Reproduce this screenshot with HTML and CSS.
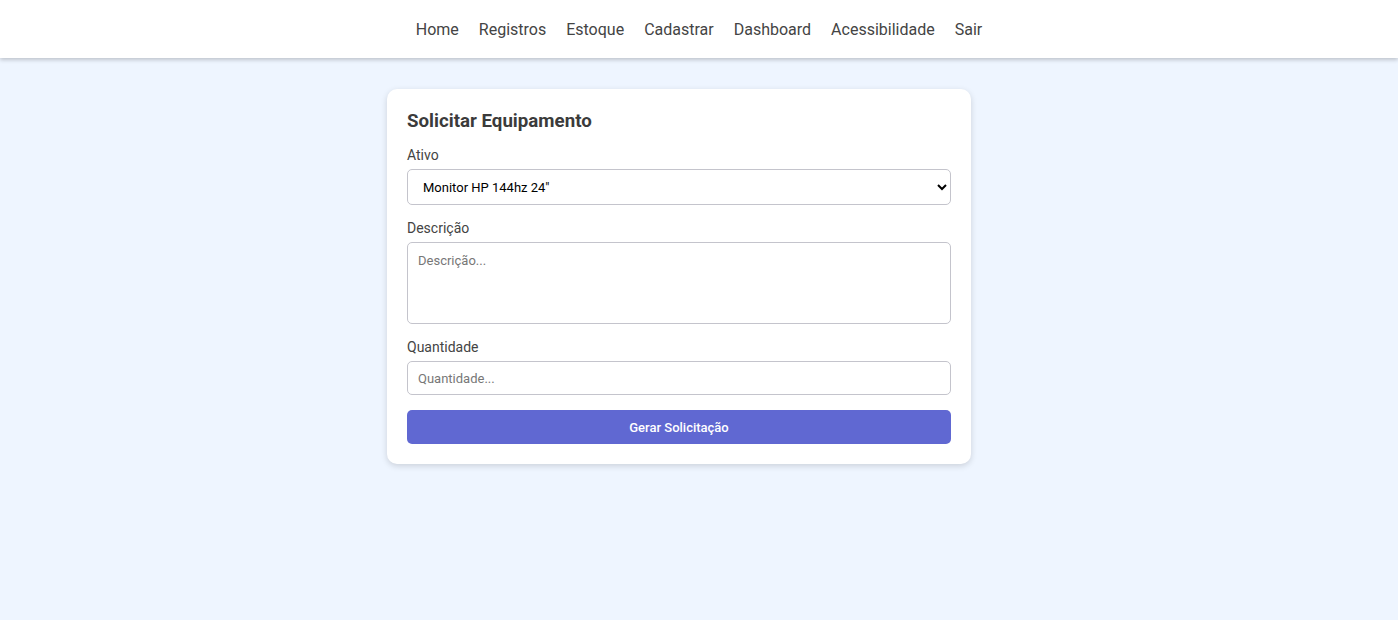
FILE: index.html
```html
<!DOCTYPE html>
<html lang="pt-BR">
<head>
<meta charset="utf-8">
<title>Solicitar Equipamento</title>
<link rel="stylesheet" href="styles.css">
</head>
<body>
<header class="topbar">
  <nav class="nav">
    <a href="#">Home</a>
    <a href="#">Registros</a>
    <a href="#">Estoque</a>
    <a href="#">Cadastrar</a>
    <a href="#">Dashboard</a>
    <a href="#">Acessibilidade</a>
    <a href="#">Sair</a>
  </nav>
</header>
<main class="wrap">
  <form class="card">
    <h3 class="title">Solicitar Equipamento</h3>
    <label class="label" for="ativo">Ativo</label>
    <select id="ativo" class="field select">
      <option>Monitor HP 144hz 24"</option>
    </select>
    <label class="label" for="desc">Descrição</label>
    <textarea id="desc" class="field textarea" placeholder="Descrição..."></textarea>
    <label class="label" for="qtd">Quantidade</label>
    <input id="qtd" class="field input" placeholder="Quantidade...">
    <button type="button" class="btn">Gerar Solicitação</button>
  </form>
</main>
</body>
</html>
```
FILE: styles.css
```css
* { box-sizing: border-box; }
html, body { margin: 0; padding: 0; }
body {
  background: #eef5ff;
  font-family: Roboto, "Liberation Sans", sans-serif;
  color: #333;
  min-height: 620px;
}
.topbar {
  background: #fff;
  height: 58px;
  box-shadow: 0 2px 4px rgba(0,0,0,0.2);
  display: flex;
  align-items: center;
  justify-content: center;
}
.nav {
  display: flex;
  gap: 20px;
}
.nav a {
  color: #444;
  text-decoration: none;
  font-size: 16px;
}
.wrap {
  width: 624px;
  margin: 31px auto 0;
}
.card {
  width: 584px;
  background: #fff;
  border-radius: 10px;
  padding: 21px 20px 20px;
  box-shadow: 0 2px 6px rgba(0,0,0,0.15);
  display: flex;
  flex-direction: column;
}
.title {
  margin: 0 0 15px;
  font-size: 18.72px;
  font-weight: 700;
  color: #3b3b3b;
  line-height: 22px;
}
.label {
  font-size: 14px;
  color: #444;
  line-height: 16px;
  margin-bottom: 6px;
}
.field {
  width: 544px;
  border: 1px solid #c4c4cc;
  border-radius: 5px;
  font-family: Roboto, "Liberation Sans", sans-serif;
  font-size: 13px;
  background: #fff;
  margin: 0 0 15px;
}
.select {
  height: 36px;
  padding: 0 6px 0 11px;
  color: #000;
}
.textarea {
  height: 82px;
  padding: 10px;
  resize: none;
  display: block;
}
.input {
  height: 34px;
  padding: 0 10px;
}
.field::placeholder { color: #777; }
.btn {
  height: 34px;
  width: 544px;
  border: none;
  border-radius: 5px;
  background: #6068d2;
  color: #fff;
  font-family: Roboto, "Liberation Sans", sans-serif;
  font-size: 13px;
  font-weight: 500;
}
```
